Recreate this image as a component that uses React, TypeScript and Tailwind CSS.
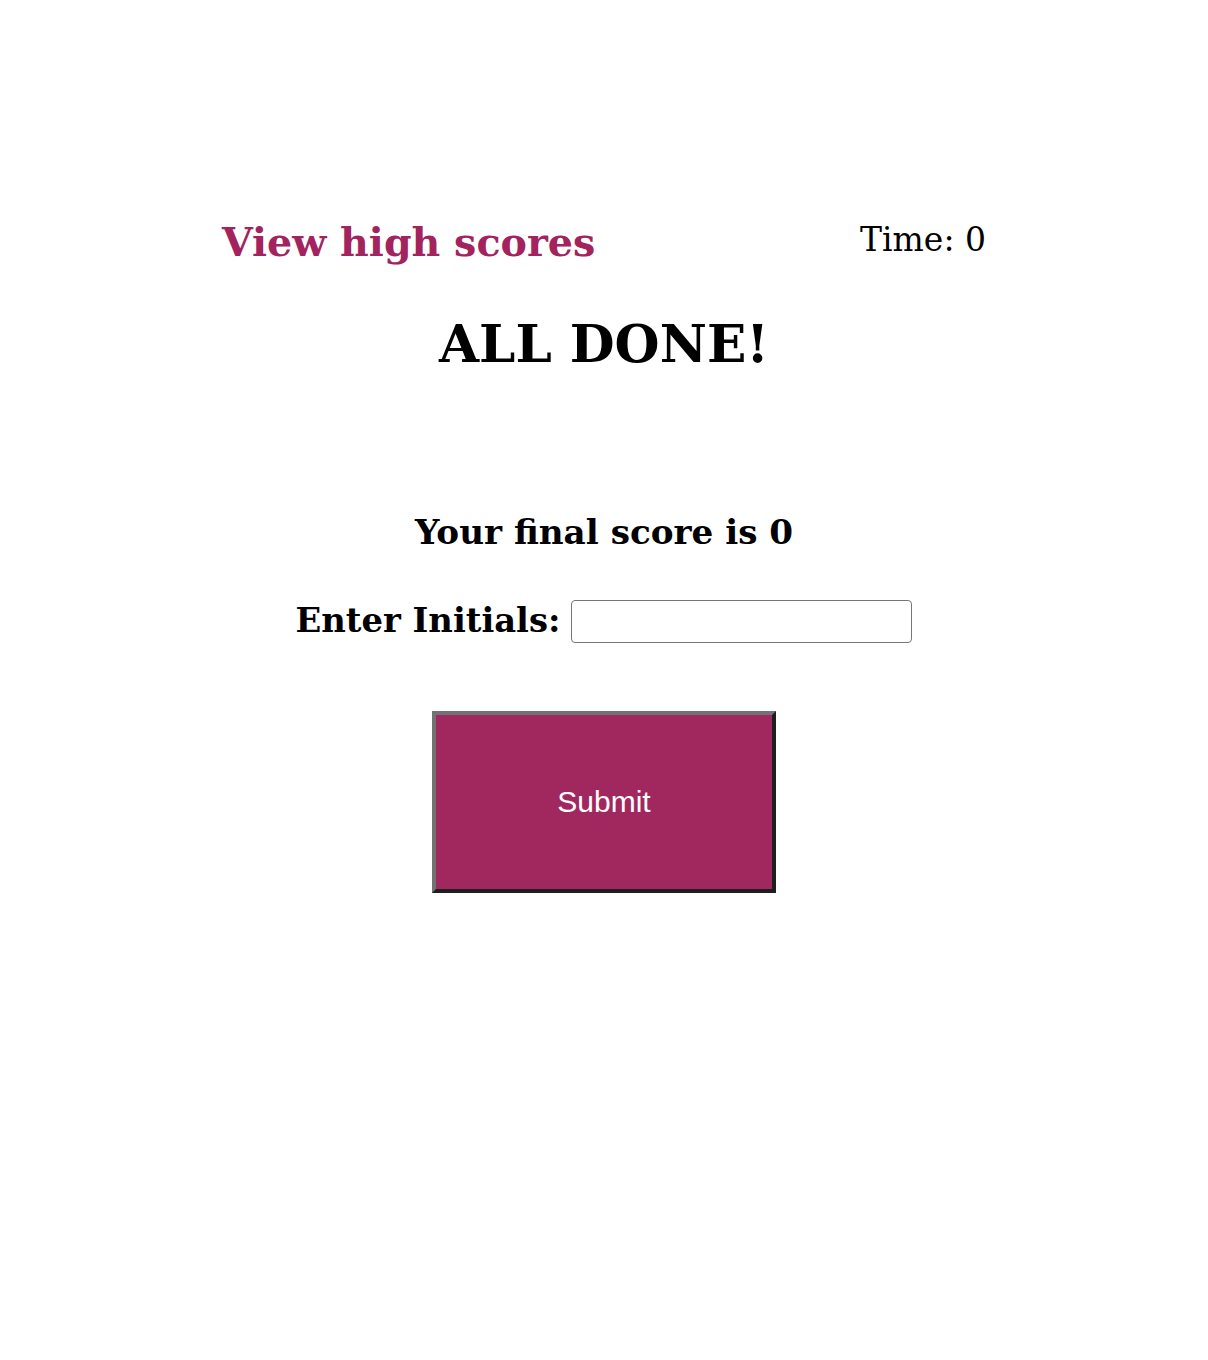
export default function App() {
  return (
    <div className="min-h-[1360px] bg-white font-['DejaVu_Serif',Georgia,serif] text-black">
      <header className="mx-auto flex w-[764px] items-start justify-between pt-[223px]">
        <a href="#" className="text-[39.6px] leading-none font-bold text-[#a2235e]">
          View high scores
        </a>
        <p className="text-[33px] leading-none">Time: 0</p>
      </header>

      <main className="mx-auto flex w-[764px] flex-col items-center">
        <h1 className="mt-[55px] text-[51.7px] leading-none font-bold">ALL DONE!</h1>

        <p className="mt-[146px] text-[34.2px] leading-none font-bold">Your final score is 0</p>

        <form className="mt-[50px] flex flex-col items-center" onSubmit={(e) => e.preventDefault()}>
          <label className="flex items-center gap-[11px] text-[33.8px] leading-none font-bold">
            Enter Initials:
            <input
              type="text"
              className="h-[43px] w-[341px] rounded-[4px] border border-[#767676] bg-white px-2 text-[20px] font-normal"
            />
          </label>

          <button
            type="submit"
            className="mt-[68px] h-[182px] w-[344px] border-4 border-t-[#727272] border-l-[#727272] border-r-[#1e1e1e] border-b-[#1e1e1e] bg-[#a1285f] font-['Liberation_Sans',Arial,sans-serif] text-[30px] text-white"
          >
            Submit
          </button>
        </form>
      </main>
    </div>
  );
}
